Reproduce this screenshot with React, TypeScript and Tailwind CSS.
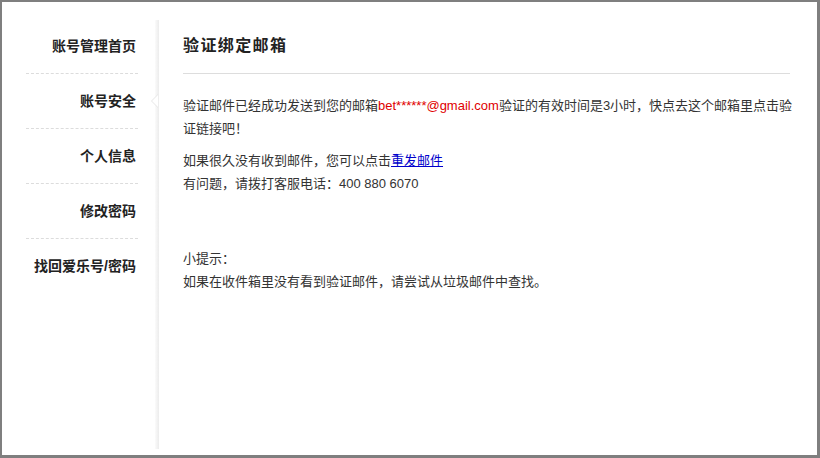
import React from 'react';

const navItems = ['账号管理首页', '账号安全', '个人信息', '修改密码', '找回爱乐号/密码'];

const font = "font-['Liberation_Sans','Noto_Sans_CJK_SC',sans-serif]";

export default function App() {
  return (
    <div
      className={`w-[820px] h-[458px] bg-white border-t-2 border-l-2 border-r-[3px] border-b-[3px] border-[#7f7f7f] flex ${font} text-[#333]`}
    >
      {/* sidebar */}
      <aside className="relative w-[158px] shrink-0 pt-[17px]">
        <ul>
          {navItems.map((item, i) => (
            <li key={item} className="relative h-[55px] flex flex-col">
              <div className="flex-1 flex items-center justify-end pr-[24px] text-[14px] font-bold text-[#222]">
                {item}
              </div>
              {i < navItems.length - 1 && (
                <div className="ml-[24px] mr-[22px] border-b border-dashed border-[#dcdcdc]" />
              )}
              {i === 1 && (
                <span className="absolute right-[2px] top-[20px] z-10 w-0 h-0 border-y-[7px] border-y-transparent border-r-[7px] border-r-[#e6e6e6]">
                  <span className="absolute top-[-6px] left-[1px] w-0 h-0 border-y-[6px] border-y-transparent border-r-[6px] border-r-white" />
                </span>
              )}
            </li>
          ))}
        </ul>
        <div className="absolute right-[1px] top-[18px] bottom-[6px] w-[4px] bg-gradient-to-r from-[#fbfbfb] to-[#ececec]" />
      </aside>

      {/* main */}
      <main className="flex-1 pl-[23px] pt-[17px]">
        <div className="w-[607px] h-[55px] flex items-center border-b border-[#dddddd]">
          <h1 className="text-[16px] font-bold tracking-[1.4px] text-[#222]">验证绑定邮箱</h1>
        </div>

        <div className="w-[614px] text-[13px] leading-[23px] mt-[20px]">
          <p>
            验证邮件已经成功发送到您的邮箱<span className="text-[#e00000]">bet******@gmail.com</span>
            验证的有效时间是3小时，快点去这个邮箱里点击验证链接吧！
          </p>
          <p className="mt-[9px]">
            如果很久没有收到邮件，您可以点击
            <a href="#" className="text-[#0000cc] underline">
              重发邮件
            </a>
          </p>
          <p>有问题，请拨打客服电话：400 880 6070</p>
          <p className="mt-[52px]">小提示：</p>
          <p>如果在收件箱里没有看到验证邮件，请尝试从垃圾邮件中查找。</p>
        </div>
      </main>
    </div>
  );
}
